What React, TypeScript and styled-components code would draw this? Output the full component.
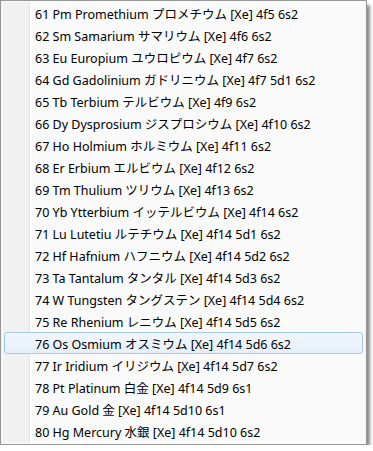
import styled, { createGlobalStyle } from "styled-components";

const GlobalStyle = createGlobalStyle`
	html, body {
		margin: 0;
		padding: 0;
		background: #ffffff;
	}
`;

const Menu = styled.div`
	box-sizing: border-box;
	width: 367px;
	height: 445px;
	border: 1px solid #979797;
	background: #f0f0f0;
	box-shadow: 4px 4px 3px -1px rgba(0, 0, 0, 0.45);
	padding: 0 1px;
	font-family: "Noto Sans", "Noto Sans CJK JP", sans-serif;
`;

const List = styled.ul`
	list-style: none;
	margin: 0;
	padding: 0 1px;
	height: 100%;
	box-sizing: border-box;
	background: linear-gradient(
		90deg,
		#f1f1f1 0,
		#f1f1f1 26px,
		#e2e3e3 26px,
		#e2e3e3 27px,
		#ffffff 27px,
		#ffffff 28px,
		#fafafa 28px
	);
	border: 1px solid #fcfcfc;
`;

const Item = styled.li<{ $active?: boolean }>`
	box-sizing: border-box;
	height: 22px;
	display: flex;
	align-items: center;
	padding-left: 30px;
	font-size: 12.5px;
	color: #000000;
	white-space: nowrap;
	border: 1px solid ${(p) => (p.$active ? "#a8caf0" : "transparent")};
	border-radius: 3px;
	background: ${(p) =>
		p.$active ? "linear-gradient(180deg, #f2f7fd 0%, #e6effb 100%)" : "transparent"};
`;

const elements = [
	"61 Pm Promethium プロメチウム [Xe] 4f5 6s2",
	"62 Sm Samarium サマリウム [Xe] 4f6 6s2",
	"63 Eu Europium ユウロピウム [Xe] 4f7 6s2",
	"64 Gd Gadolinium ガドリニウム [Xe] 4f7 5d1 6s2",
	"65 Tb Terbium テルビウム [Xe] 4f9 6s2",
	"66 Dy Dysprosium ジスプロシウム [Xe] 4f10 6s2",
	"67 Ho Holmium ホルミウム [Xe] 4f11 6s2",
	"68 Er Erbium エルビウム [Xe] 4f12 6s2",
	"69 Tm Thulium ツリウム [Xe] 4f13 6s2",
	"70 Yb Ytterbium イッテルビウム [Xe] 4f14 6s2",
	"71 Lu Lutetiu ルテチウム [Xe] 4f14 5d1 6s2",
	"72 Hf Hafnium ハフニウム [Xe] 4f14 5d2 6s2",
	"73 Ta Tantalum タンタル [Xe] 4f14 5d3 6s2",
	"74 W Tungsten タングステン [Xe] 4f14 5d4 6s2",
	"75 Re Rhenium レニウム [Xe] 4f14 5d5 6s2",
	"76 Os Osmium オスミウム [Xe] 4f14 5d6 6s2",
	"77 Ir Iridium イリジウム [Xe] 4f14 5d7 6s2",
	"78 Pt Platinum 白金 [Xe] 4f14 5d9 6s1",
	"79 Au Gold 金 [Xe] 4f14 5d10 6s1",
	"80 Hg Mercury 水銀 [Xe] 4f14 5d10 6s2",
];

export default function App() {
	return (
		<>
			<GlobalStyle />
			<Menu>
				<List>
					{elements.map((label, i) => (
						<Item key={label} $active={i === 15}>
							{label}
						</Item>
					))}
				</List>
			</Menu>
		</>
	);
}
